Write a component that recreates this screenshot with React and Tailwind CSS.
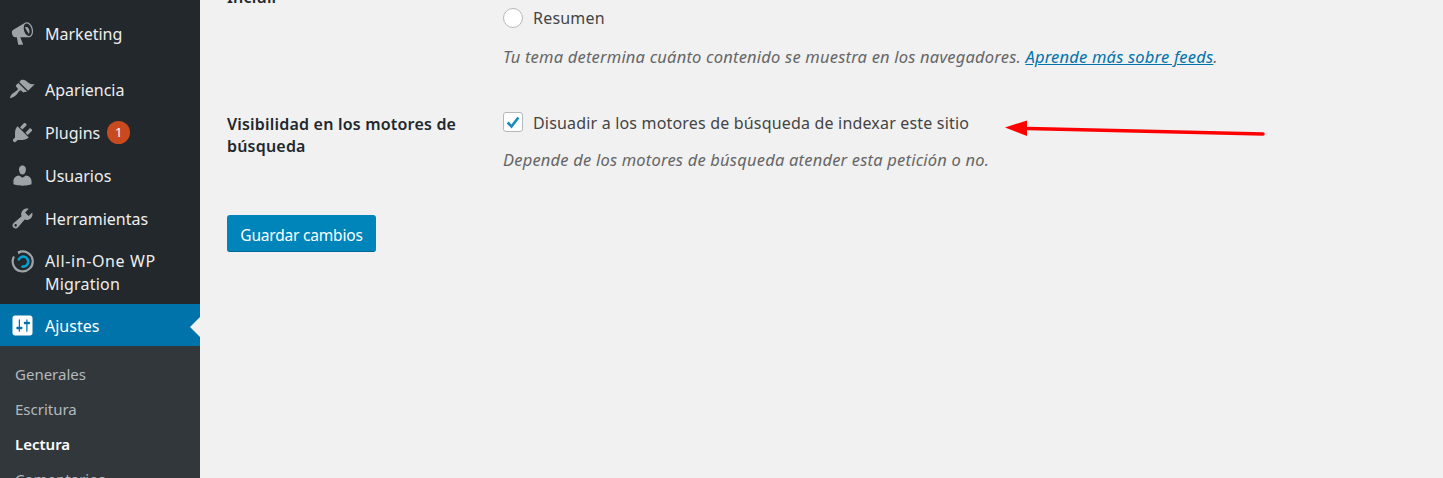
const paths = {
  marketing: "M18.15 5.94c.46 1.62.38 3.22-.02 4.48-.42 1.28-1.26 2.18-2.3 2.48-.16.06-.26.06-.4.06-.06.02-.12.02-.18.02-.06.02-.14.02-.22.02h-6.8l2.22 5.5c.02.14-.06.26-.14.34-.08.1-.24.16-.34.16H6.95c-.1 0-.26-.06-.34-.16-.08-.08-.16-.2-.14-.34l-1-5.5H4.25l-.02-.02c-.5.06-1.08-.18-1.54-.62s-.88-1.08-1.06-1.88c-.24-.8-.2-1.56-.02-2.2.18-.62.58-1.08 1.06-1.3l.02-.02 9-5.4c.1-.06.18-.1.24-.16.06-.04.14-.08.24-.12.16-.08.28-.12.5-.18 1.04-.3 2.24.1 3.22.98s1.78 2.2 2.26 3.82zm-2.58 5.98h-.02c.4-.1.74-.34 1.04-.7.58-.7.86-1.76.86-3.04 0-.64-.1-1.3-.28-1.98-.34-1.36-1.02-2.5-1.78-3.24s-1.68-1.1-2.46-.88c-.82.22-1.4.96-1.7 2-.32 1.04-.28 2.36.06 3.72.38 1.36 1 2.5 1.8 3.24.78.74 1.62 1.1 2.48.88zm-2.54-7.08c.22-.04.42-.02.62.04.2.08.38.18.56.34.18.14.34.32.5.54s.3.44.42.7.22.54.3.84c.18.58.2 1.16.1 1.68-.1.54-.28.94-.62 1.2l-2.88-4.86c.16-.22.38-.4.5-.48z",
  appearance: "M14.48 11.06L7.41 3.99l1.5-1.5c.5-.56 2.3-.47 3.51.32 1.21.8 1.43 1.28 2.91 2.1 1.18.64 2.45 1.26 4.45.85zm-.71.71L6.7 4.7 4.93 6.47c-.39.39-.39 1.02 0 1.41l1.06 1.06c.39.39.39 1.03 0 1.42-.6.6-1.43 1.11-2.21 1.69-.35.26-.7.53-1.01.84C1.43 13.23.13 15.2 0 17c1.8-.13 3.77-1.43 5.11-2.77.31-.31.58-.66.84-1.01.58-.78 1.09-1.61 1.69-2.21.39-.39 1.03-.39 1.42 0l1.06 1.06c.39.39 1.02.39 1.41 0z",
  plugins: "M13.11 4.36L9.87 7.6 8 5.73l3.24-3.24c.35-.34 1.05-.2 1.56.32.52.51.66 1.21.31 1.55zm-8 1.77l.91-1.12 9.01 9.01-1.19.84c-.71.71-2.63 1.16-3.82 1.16H6.14L4.9 17.26c-.59.59-1.54.59-2.12 0-.59-.58-.59-1.53 0-2.12l1.24-1.24v-3.88c0-1.13.4-3.19 1.09-3.89zm7.26 3.97l3.24-3.24c.34-.35 1.04-.21 1.55.31.52.51.66 1.21.31 1.55l-3.24 3.25z",
  users: "M10 9.25c-2.27 0-2.73-3.44-2.73-3.44C7 4.02 7.82 2 9.97 2c2.16 0 2.98 2.02 2.71 3.81 0 0-.41 3.44-2.68 3.44zm0 2.57L12.72 10c2.39 0 4.52 2.33 4.52 4.53v2.49s-3.65 1.13-7.24 1.13c-3.65 0-7.24-1.13-7.24-1.13v-2.49c0-2.25 1.94-4.48 4.47-4.48z",
  tools: "M16.68 9.77c-1.34 1.34-3.3 1.67-4.95.99l-5.41 6.52c-.99.99-2.59.99-3.58 0s-.99-2.59 0-3.57l6.52-5.42c-.68-1.65-.35-3.61.99-4.95 1.28-1.28 3.12-1.62 4.72-1.06l-2.89 2.89 2.82 2.82 2.86-2.87c.53 1.58.18 3.39-1.08 4.65zM3.81 16.21c.4.39 1.04.39 1.43 0 .4-.4.4-1.04 0-1.43-.39-.4-1.03-.4-1.43 0-.39.39-.39 1.03 0 1.43z",
  settings: "M18 16V4c0-1.1-.9-2-2-2H4c-1.1 0-2 .9-2 2v12c0 1.1.9 2 2 2h12c1.1 0 2-.9 2-2zM8 11h1c.55 0 1 .45 1 1s-.45 1-1 1H8v1.5c0 .28-.22.5-.5.5s-.5-.22-.5-.5V13H6c-.55 0-1-.45-1-1s.45-1 1-1h1V5.5c0-.28.22-.5.5-.5s.5.22.5.5V7zm5-2h-1c-.55 0-1-.45-1-1s.45-1 1-1h1V5.5c0-.28.22-.5.5-.5s.5.22.5.5V7h1c.55 0 1 .45 1 1s-.45 1-1 1h-1v5.5c0 .28-.22.5-.5.5s-.5-.22-.5-.5V9z",
};
paths.settings = "M18 16V4c0-1.1-.9-2-2-2H4c-1.1 0-2 .9-2 2v12c0 1.1.9 2 2 2h12c1.1 0 2-.9 2-2zM8 11h1c.55 0 1 .45 1 1s-.45 1-1 1H8v1.5c0 .28-.22.5-.5.5s-.5-.22-.5-.5V13H6c-.55 0-1-.45-1-1s.45-1 1-1h1V5.5c0-.28.22-.5.5-.5s.5.22.5.5V11zm5-2h-1c-.55 0-1-.45-1-1s.45-1 1-1h1V5.5c0-.28.22-.5.5-.5s.5.22.5.5V7h1c.55 0 1 .45 1 1s-.45 1-1 1h-1v5.5c0 .28-.22.5-.5.5s-.5-.22-.5-.5V9z";

function Dash({ name, white }) {
  return (
    <svg viewBox="0 0 20 20" className={white ? "w-[25px] h-[25px] shrink-0 fill-white" : "w-[25px] h-[25px] shrink-0 fill-[#9ea3a8]"}>
      <path d={paths[name]} />
    </svg>
  );
}

function Migration() {
  return (
    <svg viewBox="0 0 25 25" className="w-[25px] h-[25px] shrink-0" fill="none">
      <path d="M8 3.6 A10 10 0 1 1 4 7.5" stroke="#9ea3a8" strokeWidth="2.2" />
      <path d="M8 2 L11.5 3 L8.5 5.5 Z" fill="#9ea3a8" />
      <path d="M8.4 11.5 A5 5 0 1 1 11.5 17.3" stroke="#00a0d2" strokeWidth="2.6" />
    </svg>
  );
}

function Item({ icon, children, extra }) {
  return (
    <div className="h-[43px] flex items-center pl-[10px] text-[#eeeeee]">
      {icon}
      <span className="ml-[10px]">{children}</span>
      {extra}
    </div>
  );
}

export default function App() {
  return (
    <div className="h-[478px] overflow-hidden relative flex bg-[#f1f1f1] font-['Noto_Sans','Open_Sans',sans-serif] text-[16px]">
      <aside className="w-[200px] shrink-0 bg-[#23282d] pt-[12px]">
        <Item icon={<Dash name="marketing" />}>Marketing</Item>
        <div className="h-[13px]" />
        <Item icon={<Dash name="appearance" />}>Apariencia</Item>
        <Item
          icon={<Dash name="plugins" />}
          extra={
            <span className="ml-[7px] w-[23px] h-[23px] rounded-full bg-[#ca4a1f] text-white text-[13px] flex items-center justify-center">1</span>
          }
        >
          Plugins
        </Item>
        <Item icon={<Dash name="users" />}>Usuarios</Item>
        <Item icon={<Dash name="tools" />}>Herramientas</Item>
        <div className="h-[64px] flex items-start pl-[10px] pt-[9px] text-[#eeeeee] leading-[23px]">
          <Migration />
          <span className="ml-[10px] pt-[1px]">
            <span className="tracking-[0.6px]">All-in-One WP</span>
            <br />
            <span className="tracking-[0.2px]">Migration</span>
          </span>
        </div>
        <div className="h-[42px] relative flex items-center pl-[10px] bg-[#0073aa] text-white">
          <Dash name="settings" white />
          <span className="ml-[10px] pt-[1px]">Ajustes</span>
          <span className="absolute right-0 top-[13px] border-y-[10px] border-y-transparent border-r-[10px] border-r-[#f1f1f1]" />
        </div>
        <div className="bg-[#32373c] pt-[11px] pl-[15px] text-[15px] text-[#b4b9be] h-[200px]">
          <div className="h-[35px] flex items-center">Generales</div>
          <div className="h-[35px] flex items-center">Escritura</div>
          <div className="h-[35px] flex items-center text-white font-semibold">Lectura</div>
          <div className="h-[35px] flex items-center">Comentarios</div>
        </div>
      </aside>

      <main className="flex-1 pl-[27px] text-[#444444] -mt-[16px]">
        <div className="flex">
          <div className="w-[276px] font-semibold leading-[22px] pt-[2px] tracking-[0.2px] text-[#23282d]">Incluir</div>
          <div>
            <div className="h-[22px]" />
            <label className="h-[24px] flex items-center">
              <span className="w-[20px] h-[20px] rounded-full bg-white border border-[#b4b9be]" />
              <span className="ml-[10px] tracking-[0.2px]">Resumen</span>
            </label>
            <p className="mt-[15px] h-[24px] leading-[24px] italic text-[#666666] text-[16.5px] tracking-[0.2px] whitespace-nowrap">
              Tu tema determina cuánto contenido se muestra en los navegadores.{" "}
              <a className="text-[#0073aa] underline">Aprende más sobre feeds</a>.
            </p>
          </div>
        </div>

        <div className="flex mt-[41px]">
          <div className="w-[276px] font-semibold leading-[22px] pt-[3px] tracking-[0.2px] text-[#23282d]">
            Visibilidad en los motores de<br />búsqueda
          </div>
          <div>
            <label className="h-[24px] flex items-center">
              <span className="w-[20px] h-[20px] rounded-[3px] bg-white border border-[#b4b9be] flex items-center justify-center">
                <svg viewBox="0 0 20 20" className="w-[20px] h-[20px]">
                  <path d="M4 10.5 L8.3 15 L16 5" fill="none" stroke="#1e8cbe" strokeWidth="3" />
                </svg>
              </span>
              <span className="ml-[10px] pt-[2px] tracking-[0.18px]">Disuadir a los motores de búsqueda de indexar este sitio</span>
            </label>
            <p className="mt-[14px] h-[24px] leading-[24px] italic text-[#666666] text-[16.5px] tracking-[0.2px] whitespace-nowrap">
              Depende de los motores de búsqueda atender esta petición o no.
            </p>
          </div>
        </div>

        <button className="mt-[43px] w-[149px] h-[37px] pt-[5px] rounded-[3px] bg-[#0085ba] border-b border-[#006799] text-white text-[15.5px] tracking-[-0.2px] flex items-center justify-center">
          Guardar cambios
        </button>
      </main>

      <svg className="absolute left-[1000px] top-[115px] w-[270px] h-[25px]" viewBox="0 0 270 25">
        <path d="M28 13.5 L263 19" stroke="#ff0000" strokeWidth="3.5" strokeLinecap="round" fill="none" />
        <path d="M5 12.5 L27 5.5 L27 21 Z" fill="#ff0000" />
      </svg>
    </div>
  );
}
